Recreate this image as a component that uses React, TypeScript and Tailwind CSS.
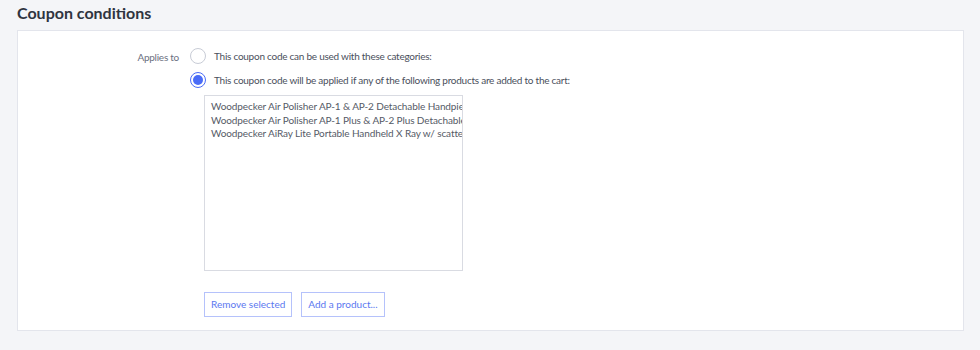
import React from "react";

export default function App() {
  const products = [
    "Woodpecker Air Polisher AP-1 & AP-2 Detachable Handpiece",
    "Woodpecker Air Polisher AP-1 Plus & AP-2 Plus Detachable Handpiece",
    "Woodpecker AiRay Lite Portable Handheld X Ray w/ scatter shield",
  ];
  return (
    <div className="w-[980px] h-[350px] bg-[#f4f5f8] pt-[2px] pl-[17px] pr-[16px]" style={{ fontFamily: "Lato, 'Liberation Sans', sans-serif" }}>
      <h2 className="text-[16px] font-bold text-[#2f3440] leading-[22px] h-[28px]">Coupon conditions</h2>
      <div className="bg-white border border-[#e3e5ec] h-[301px] pt-[16px]">
        <div className="flex items-start">
          <div className="w-[172px] text-right text-[10px] text-[#6b7080] leading-[18px] pt-[1px] pr-[11px] tracking-[-0.25px]">Applies to</div>
          <div className="flex flex-col">
            <label className="flex items-center h-[18px] gap-[8px] tracking-[-0.25px]">
              <span className="w-[16px] h-[16px] rounded-full border border-[#c8ccd6] bg-white"></span>
              <span className="text-[10px] text-[#4a4f5c]">This coupon code can be used with these categories:</span>
            </label>
            <label className="flex items-center h-[18px] gap-[8px] mt-[6px] tracking-[-0.25px]">
              <span className="w-[16px] h-[16px] rounded-full border border-[#4a6cf7] bg-white flex items-center justify-center">
                <span className="w-[10px] h-[10px] rounded-full bg-[#4a6cf7]"></span>
              </span>
              <span className="text-[10px] text-[#4a4f5c]">This coupon code will be applied if any of the following products are added to the cart:</span>
            </label>
            <div className="ml-[14px] mt-[6px] w-[259px] h-[176px] border border-[#d9dbe2] overflow-hidden pt-[4px] pl-[6px]">
              {products.map((p) => (
                <div key={p} className="whitespace-nowrap text-[10px] leading-[13.5px] text-[#555a66] tracking-[-0.1px]">{p}</div>
              ))}
            </div>
            <div className="ml-[14px] mt-[21px] flex gap-[9px]">
              <button className="h-[25px] px-[6px] border border-[#b5c2fb] text-[10px] text-[#5b78f0] bg-white">Remove selected</button>
              <button className="h-[25px] px-[6px] border border-[#b5c2fb] text-[10px] text-[#5b78f0] bg-white">Add a product...</button>
            </div>
          </div>
        </div>
      </div>
    </div>
  );
}
